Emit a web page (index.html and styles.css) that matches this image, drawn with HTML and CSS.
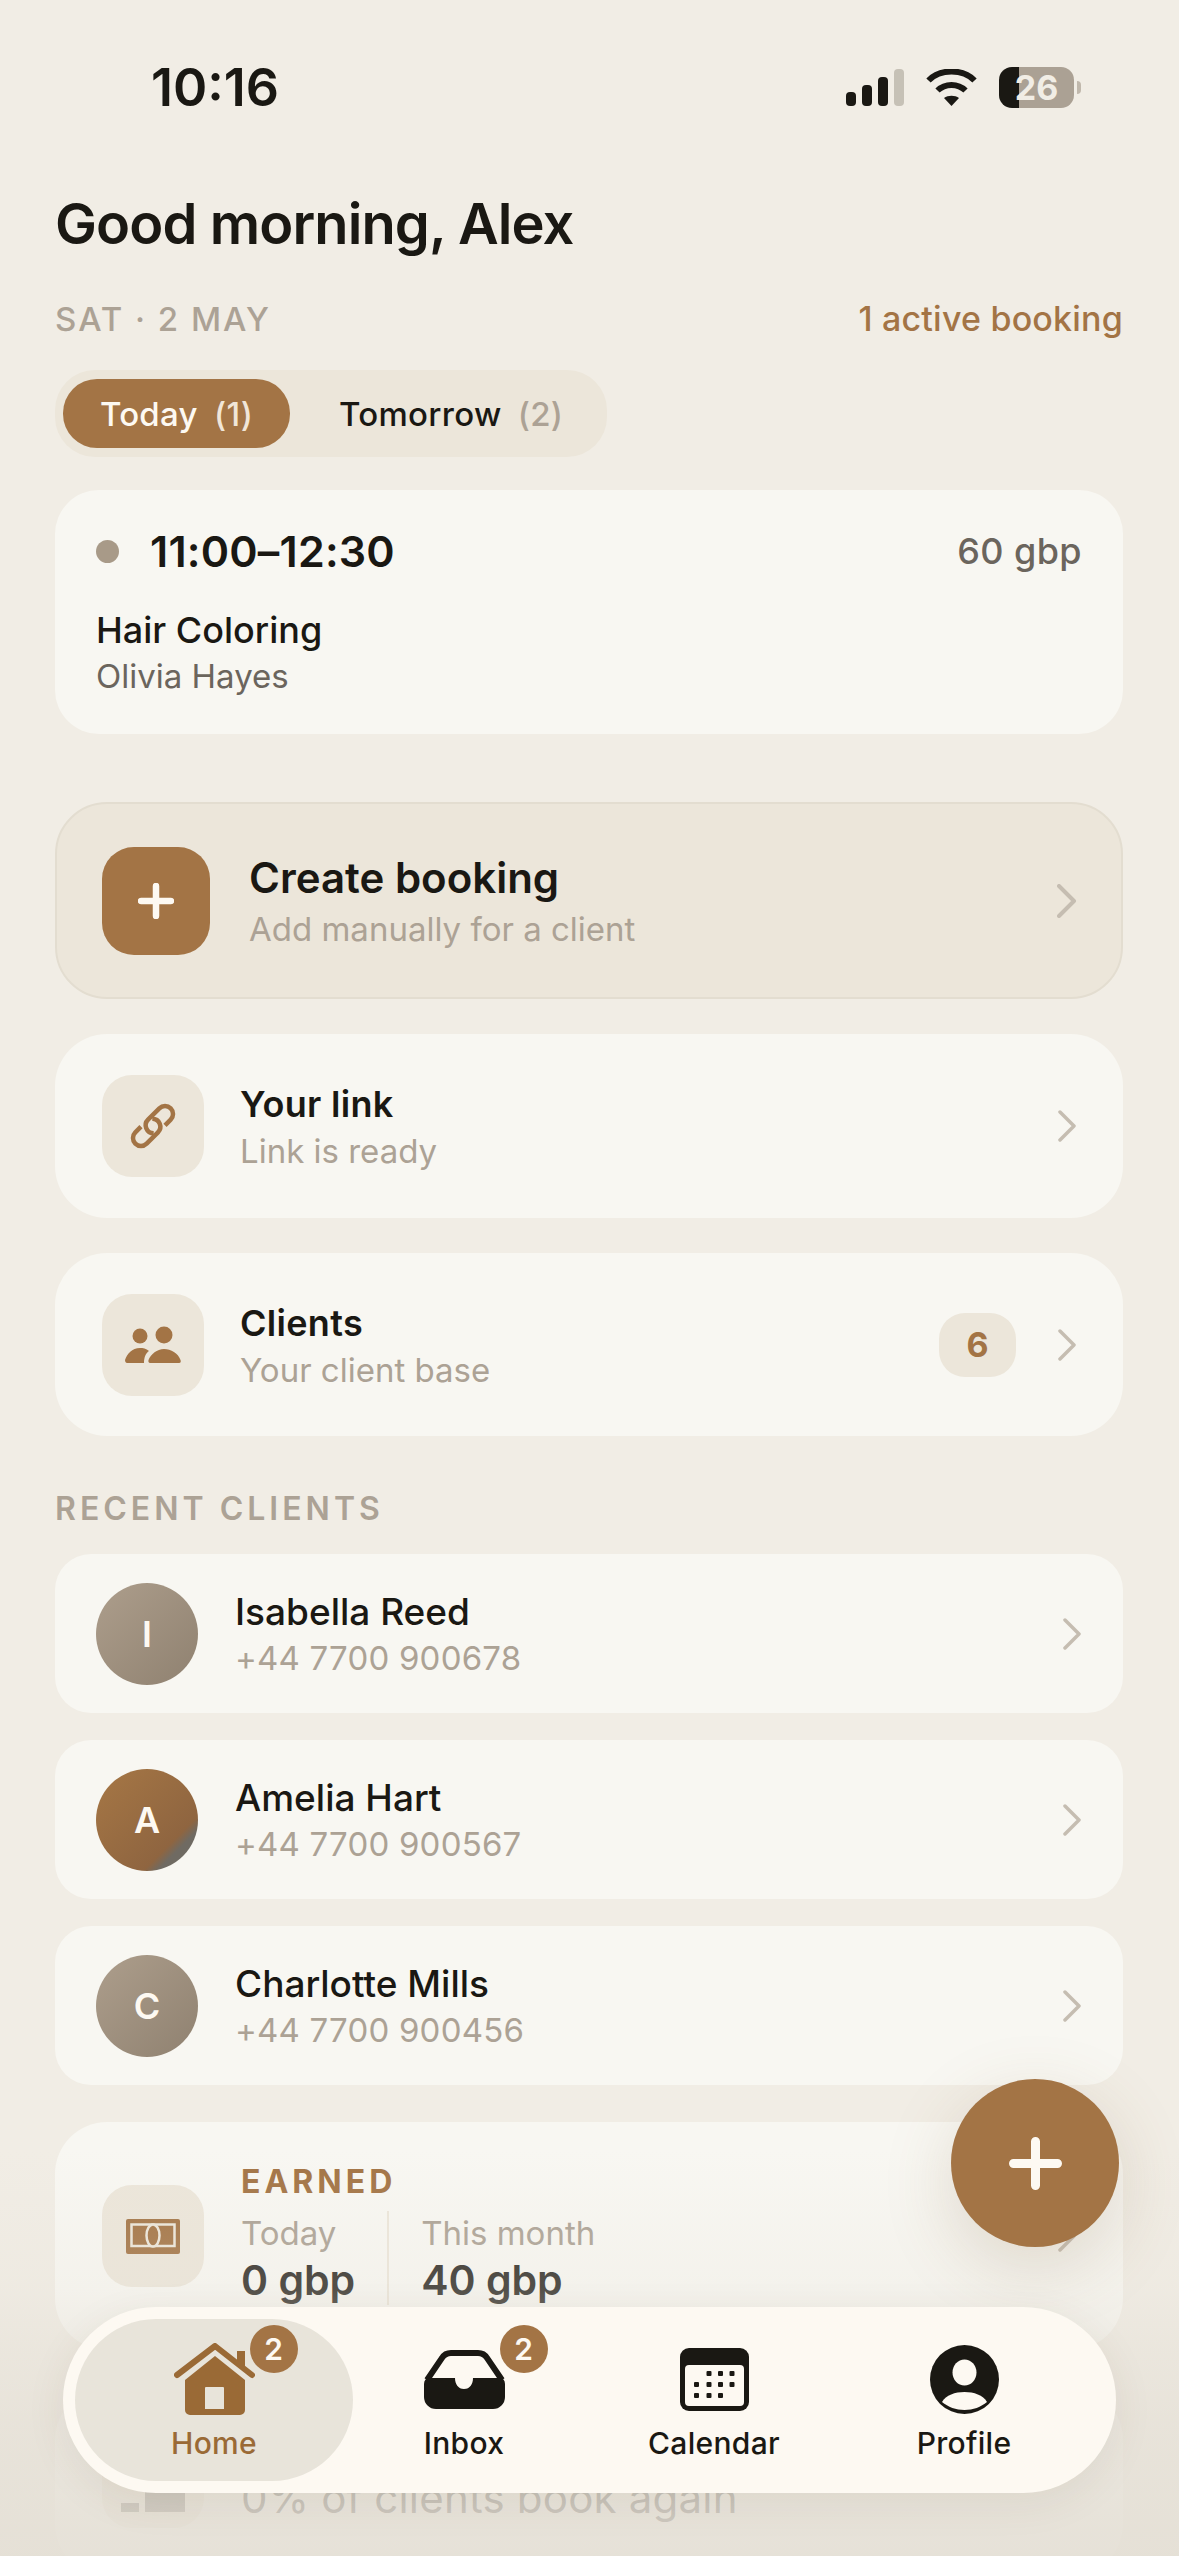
FILE: index.html
```html
<!DOCTYPE html>
<html lang="en">
<head>
<meta charset="UTF-8">
<meta name="viewport" content="width=device-width, initial-scale=1.0">
<title>Home</title>
<link rel="stylesheet" href="styles.css">
</head>
<body>
<div class="screen">
    <div class="status-bar">
        <span class="status-time">10:16</span>
        <div class="status-icons">
            <div class="signal">
                <span class="bar bar-1"></span>
                <span class="bar bar-2"></span>
                <span class="bar bar-3"></span>
                <span class="bar bar-4"></span>
            </div>
            <svg class="wifi" width="51" height="37" viewBox="0 0 51 37">
                <path d="M2.5 11.5C14 -0.5 37 -0.5 48.5 11.5" fill="none" stroke="#1a1813" stroke-width="6"/>
                <path d="M11.5 21.5C19 14 32 14 39.5 21.5" fill="none" stroke="#1a1813" stroke-width="6"/>
                <path d="M25.5 37L18 29C22 26 29 26 33 29Z" fill="#1a1813"/>
            </svg>
            <div class="battery">26</div>
        </div>
    </div>

    <div class="content">
        <h1 class="greeting">Good morning, Alex</h1>
        <div class="date-row">
            <span class="date">SAT · 2 MAY</span>
            <span class="active-count">1 active booking</span>
        </div>

        <div class="day-tabs">
            <div class="day-tab active">Today <span class="tab-count">(1)</span></div>
            <div class="day-tab">Tomorrow <span class="tab-count">(2)</span></div>
        </div>

        <div class="booking-card">
            <div class="booking-top">
                <span class="booking-dot"></span>
                <span class="booking-time">11:00–12:30</span>
                <span class="booking-price">60 gbp</span>
            </div>
            <div class="booking-service">Hair Coloring</div>
            <div class="booking-client">Olivia Hayes</div>
        </div>

        <div class="create-card">
            <div class="create-icon">
                <svg width="36" height="36" viewBox="0 0 36 36"><path d="M18 3V33M3 18H33" stroke="#fdf9f2" stroke-width="6.5" stroke-linecap="round"/></svg>
            </div>
            <div class="row-text">
                <div class="create-title">Create booking</div>
                <div class="create-sub">Add manually for a client</div>
            </div>
            <svg class="chevron chevron-create" width="20" height="34" viewBox="0 0 20 34"><path d="M2 2L17 17L2 32" fill="none" stroke="#c5bdb1" stroke-width="4" stroke-linecap="round" stroke-linejoin="round"/></svg>
        </div>

        <div class="action-card">
            <div class="icon-box">
                <svg width="52" height="52" viewBox="-26 -26 52 52" fill="none" stroke="#a37445" stroke-width="4.5">
                    <g transform="rotate(-45)">
                        <path d="M9 8H17A8 8 0 0 0 17 -8H1A8 8 0 0 0 -4.66 5.66"/>
                        <path d="M-9 -8H-17A8 8 0 0 0 -17 8H-1A8 8 0 0 0 4.66 -5.66"/>
                    </g>
                </svg>
            </div>
            <div class="row-text">
                <div class="row-title">Your link</div>
                <div class="row-sub">Link is ready</div>
            </div>
            <svg class="chevron" width="20" height="32" viewBox="0 0 20 32"><path d="M3 2L17 16L3 30" fill="none" stroke="#c5bdb1" stroke-width="3.5" stroke-linecap="round" stroke-linejoin="round"/></svg>
        </div>

        <div class="action-card clients-card">
            <div class="icon-box">
                <svg width="56" height="37" viewBox="0 0 56 37" fill="#a37445">
                    <circle cx="15" cy="10" r="7.5"/>
                    <circle cx="39" cy="9" r="8.5"/>
                    <path d="M2 37H19C19 31 21 27 24 25C21 22.5 18 22 15 22C7 22 2 28 0 34C0 36 1 37 2 37Z"/>
                    <path d="M25 37H54C56 37 56 35 55.5 34C53 27 46 23 39 23C32 23 26 28 23.5 34C23 36 24 37 25 37Z"/>
                </svg>
            </div>
            <div class="row-text">
                <div class="row-title">Clients</div>
                <div class="row-sub">Your client base</div>
            </div>
            <span class="count-badge">6</span>
            <svg class="chevron" width="20" height="32" viewBox="0 0 20 32"><path d="M3 2L17 16L3 30" fill="none" stroke="#c5bdb1" stroke-width="3.5" stroke-linecap="round" stroke-linejoin="round"/></svg>
        </div>

        <div class="section-label">RECENT CLIENTS</div>

        <div class="client-list">
            <div class="client-row">
                <div class="avatar">I</div>
                <div class="row-text">
                    <div class="client-name">Isabella Reed</div>
                    <div class="client-phone">+44 7700 900678</div>
                </div>
                <svg class="chevron chevron-client" width="20" height="32" viewBox="0 0 20 32"><path d="M3 2L17 16L3 30" fill="none" stroke="#c5bdb1" stroke-width="3.5" stroke-linecap="round" stroke-linejoin="round"/></svg>
            </div>
            <div class="client-row">
                <div class="avatar avatar-warm">A</div>
                <div class="row-text">
                    <div class="client-name">Amelia Hart</div>
                    <div class="client-phone">+44 7700 900567</div>
                </div>
                <svg class="chevron chevron-client" width="20" height="32" viewBox="0 0 20 32"><path d="M3 2L17 16L3 30" fill="none" stroke="#c5bdb1" stroke-width="3.5" stroke-linecap="round" stroke-linejoin="round"/></svg>
            </div>
            <div class="client-row">
                <div class="avatar">C</div>
                <div class="row-text">
                    <div class="client-name">Charlotte Mills</div>
                    <div class="client-phone">+44 7700 900456</div>
                </div>
                <svg class="chevron chevron-client" width="20" height="32" viewBox="0 0 20 32"><path d="M3 2L17 16L3 30" fill="none" stroke="#c5bdb1" stroke-width="3.5" stroke-linecap="round" stroke-linejoin="round"/></svg>
            </div>
        </div>

        <div class="earned-card">
            <div class="icon-box">
                <svg width="54" height="35" viewBox="0 0 54 35">
                    <rect width="54" height="35" rx="2" fill="#a37445"/>
                    <rect x="5.5" y="5.5" width="43" height="21.5" fill="none" stroke="#ece6da" stroke-width="2.5"/>
                    <ellipse cx="27" cy="16.5" rx="6.5" ry="11" fill="#a37445" stroke="#ece6da" stroke-width="2.5"/>
                </svg>
            </div>
            <div class="earned-body">
                <div class="earned-label">EARNED</div>
                <div class="earned-cols">
                    <div class="earned-col">
                        <div class="earned-period">Today</div>
                        <div class="earned-value">0 gbp</div>
                    </div>
                    <div class="earned-col earned-col-month">
                        <div class="earned-period">This month</div>
                        <div class="earned-value">40 gbp</div>
                    </div>
                </div>
            </div>
            <svg class="chevron" width="20" height="32" viewBox="0 0 20 32"><path d="M3 2L17 16L3 30" fill="none" stroke="#c5bdb1" stroke-width="3.5" stroke-linecap="round" stroke-linejoin="round"/></svg>
        </div>

        <div class="rebook-card">
            <div class="icon-box">
                <svg width="64" height="69" viewBox="0 0 64 69" fill="#6b655d">
                    <rect x="0" y="60" width="18" height="9"/>
                    <rect x="24" y="40" width="40" height="29"/>
                </svg>
            </div>
            <div class="rebook-text">0% of clients book again</div>
        </div>
    </div>

    <div class="bottom-fade"></div>

    <button class="fab">
        <svg width="53" height="53" viewBox="0 0 53 53"><path d="M26.5 4.5V48.5M4.5 26.5H48.5" stroke="#fdf9f2" stroke-width="9" stroke-linecap="round"/></svg>
    </button>

    <nav class="tab-bar">
        <div class="tab-item active">
            <div class="tab-icon">
                <svg width="81" height="72" viewBox="0 0 81 72" fill="#9a6a36">
                    <path d="M3 32L41 3L78 32" fill="none" stroke="#9a6a36" stroke-width="6" stroke-linecap="round" stroke-linejoin="round"/>
                    <rect x="63" y="8" width="8" height="16"/>
                    <path fill-rule="evenodd" d="M41 13L71 37V67a5 5 0 0 1-5 5H16a5 5 0 0 1-5-5V37ZM32 44a1 1 0 0 0-1 1V66H50V45a1 1 0 0 0-1-1Z"/>
                </svg>
                <span class="tab-badge">2</span>
            </div>
            <span class="tab-label">Home</span>
        </div>
        <div class="tab-item">
            <div class="tab-icon">
                <svg width="81" height="59" viewBox="0 0 81 59">
                    <path d="M3 30L18 8Q21 3 27 3H54Q60 3 63 8L78 30" fill="none" stroke="#1a1813" stroke-width="6"/>
                    <path d="M0 34Q0 28 6 28H31C31 34 34 39 40 39C46 39 49 34 49 28H75Q81 28 81 34V47A12 12 0 0 1 69 59H12A12 12 0 0 1 0 47Z" fill="#1a1813"/>
                </svg>
                <span class="tab-badge">2</span>
            </div>
            <span class="tab-label">Inbox</span>
        </div>
        <div class="tab-item">
            <div class="tab-icon">
                <svg width="69" height="63" viewBox="0 0 69 63">
                    <rect width="69" height="63" rx="9" fill="#1a1813"/>
                    <rect x="5" y="17" width="59" height="41" rx="4" fill="#fdf9f2"/>
                    <g fill="#1a1813">
                        <rect x="26.5" y="23" width="5" height="5" rx="1"/><rect x="38" y="23" width="5" height="5" rx="1"/><rect x="49.5" y="23" width="5" height="5" rx="1"/>
                        <rect x="14" y="34" width="5" height="5" rx="1"/><rect x="26.5" y="34" width="5" height="5" rx="1"/><rect x="38" y="34" width="5" height="5" rx="1"/><rect x="49.5" y="34" width="5" height="5" rx="1"/>
                        <rect x="14" y="45" width="5" height="5" rx="1"/><rect x="26.5" y="45" width="5" height="5" rx="1"/><rect x="38" y="45" width="5" height="5" rx="1"/>
                    </g>
                </svg>
            </div>
            <span class="tab-label">Calendar</span>
        </div>
        <div class="tab-item">
            <div class="tab-icon">
                <svg width="69" height="69" viewBox="0 0 69 69">
                    <circle cx="34.5" cy="34.5" r="34.5" fill="#1a1813"/>
                    <ellipse cx="34.5" cy="27.5" rx="12" ry="13" fill="#fdf9f2"/>
                    <path d="M12 57C16 50 25 47 34.5 47C44 47 53 50 57 57C51 62 43 65 34.5 65C26 65 18 62 12 57Z" fill="#fdf9f2"/>
                </svg>
            </div>
            <span class="tab-label">Profile</span>
        </div>
    </nav>
</div>
</body>
</html>
```

FILE: styles.css
```css
* {
    box-sizing: border-box;
}
body {
    margin: 0;
    padding: 0;
    background-color: #f1ede5;
    font-family: Inter, "Liberation Sans", Arial, sans-serif;
    color: #1a1813;
}
.screen {
    position: relative;
    width: 1179px;
    height: 2556px;
    overflow: hidden;
    padding-top: 60px;
    background-color: #f1ede5;
}

/* status bar */
.status-bar {
    display: flex;
    align-items: center;
    justify-content: space-between;
    height: 54px;
    padding: 0 98px 0 151px;
}
.status-time {
    padding-top: 2px;
    font-size: 52px;
    font-weight: 600;
    line-height: 54px;
}
.status-icons {
    display: flex;
    align-items: center;
    gap: 22px;
}
.signal {
    display: flex;
    align-items: flex-end;
    gap: 6px;
    height: 37px;
}
.bar {
    width: 10px;
    border-radius: 4px;
    background-color: #1a1813;
}
.bar-1 { height: 14px; }
.bar-2 { height: 21px; }
.bar-3 { height: 29px; }
.bar-4 { height: 37px; background-color: #c6c1b6; }
.battery {
    position: relative;
    width: 75px;
    height: 41px;
    margin-right: 7px;
    border-radius: 13px;
    background: linear-gradient(to right, #1a1813 20px, #aba194 20px);
    color: #f1ede5;
    font-size: 34px;
    font-weight: 700;
    line-height: 41px;
    text-align: center;
}
.battery::after {
    content: "";
    position: absolute;
    left: 78px;
    top: 14px;
    width: 4px;
    height: 13px;
    border-radius: 0 6px 6px 0;
    background-color: #c0b8ac;
}

/* page content */
.content {
    padding: 0 56px 0 55px;
    margin-top: 76px;
}
.greeting {
    margin: 0;
    font-size: 56px;
    font-weight: 600;
    line-height: 68px;
    letter-spacing: -0.9px;
}
.date-row {
    display: flex;
    justify-content: space-between;
    margin-top: 41px;
    line-height: 40px;
}
.date {
    font-size: 33px;
    font-weight: 500;
    letter-spacing: 2px;
    color: #aca295;
}
.active-count {
    font-size: 34px;
    font-weight: 500;
    letter-spacing: 0.2px;
    color: #a37445;
}
.day-tabs {
    display: flex;
    width: 552px;
    height: 87px;
    margin-top: 31px;
    padding: 9px 8px;
    border-radius: 40px;
    background-color: #ece6da;
}
.day-tab {
    display: flex;
    align-items: center;
    justify-content: center;
    gap: 7px;
    padding-left: 49px;
    font-size: 33px;
    font-weight: 500;
    letter-spacing: 0.3px;
    border-radius: 34px;
    white-space: pre;
}
.day-tab.active {
    flex-shrink: 0;
    width: 227px;
    padding: 0;
    background-color: #a37445;
    color: #fdf9f2;
}
.day-tab.active .tab-count {
    color: #f1e6d8;
}
.tab-count {
    color: #aca295;
}

/* booking */
.booking-card {
    height: 244px;
    margin-top: 33px;
    padding: 36px 41px 0;
    border-radius: 44px;
    background-color: #f8f7f2;
}
.booking-top {
    display: flex;
    align-items: center;
    height: 50px;
}
.booking-dot {
    width: 23px;
    height: 23px;
    border-radius: 50%;
    background-color: #a89a88;
}
.booking-time {
    margin-left: 31px;
    font-size: 43px;
    font-weight: 600;
    letter-spacing: 0.2px;
}
.booking-price {
    margin-left: auto;
    font-size: 36px;
    font-weight: 500;
    letter-spacing: 0.4px;
    color: #6b655d;
}
.booking-service {
    margin-top: 32px;
    font-size: 36px;
    font-weight: 500;
    line-height: 44px;
}
.booking-client {
    margin-top: 4px;
    font-size: 33px;
    line-height: 40px;
    color: #6b655d;
}

/* action cards */
.create-card {
    display: flex;
    align-items: center;
    height: 197px;
    margin-top: 68px;
    padding: 0 45px;
    border: 2px solid #e3ddd0;
    border-radius: 52px;
    background-color: #ece6da;
}
.create-icon {
    display: flex;
    align-items: center;
    justify-content: center;
    flex-shrink: 0;
    width: 108px;
    height: 108px;
    margin-right: 39px;
    border-radius: 32px;
    background-color: #a37445;
}
.row-text {
    flex-grow: 1;
}
.create-title {
    font-size: 42px;
    font-weight: 600;
    line-height: 52px;
}
.create-sub {
    margin-top: 5px;
    font-size: 33px;
    line-height: 40px;
    color: #aca295;
}
.chevron {
    flex-shrink: 0;
    margin-right: -1px;
}
.action-card {
    display: flex;
    align-items: center;
    height: 184px;
    margin-top: 35px;
    padding: 0 47px;
    border-radius: 52px;
    background-color: #f8f7f2;
}
.clients-card {
    height: 183px;
}
.icon-box {
    display: flex;
    align-items: center;
    justify-content: center;
    flex-shrink: 0;
    width: 102px;
    height: 102px;
    margin-right: 36px;
    border-radius: 30px;
    background-color: #ece6da;
}
.row-title {
    font-size: 36px;
    font-weight: 600;
    letter-spacing: 0.3px;
    line-height: 46px;
}
.row-sub {
    margin-top: 4px;
    font-size: 33px;
    line-height: 40px;
    color: #aca295;
}
.count-badge {
    width: 77px;
    height: 64px;
    margin-right: 41px;
    border-radius: 26px;
    background-color: #ece6da;
    color: #a37445;
    font-size: 34px;
    font-weight: 700;
    line-height: 64px;
    text-align: center;
}

/* recent clients */
.section-label {
    margin-top: 53px;
    font-size: 32px;
    font-weight: 600;
    line-height: 40px;
    letter-spacing: 4px;
    color: #aca295;
}
.client-list {
    display: flex;
    flex-direction: column;
    gap: 27px;
    margin-top: 25px;
}
.client-row {
    display: flex;
    align-items: center;
    height: 159px;
    padding: 0 41px;
    border-radius: 36px;
    background-color: #f8f7f2;
}
.avatar {
    flex-shrink: 0;
    width: 102px;
    height: 102px;
    margin-right: 37px;
    border-radius: 50%;
    background: linear-gradient(135deg, #ad9e8c, #8f8170);
    color: #fdf9f2;
    font-size: 36px;
    font-weight: 600;
    line-height: 102px;
    text-align: center;
}
.avatar-warm {
    background: linear-gradient(135deg, #a67745 0%, #8f6540 73%, #6f6a62 80%);
}
.client-name {
    font-size: 37px;
    font-weight: 500;
    line-height: 46px;
}
.client-phone {
    margin-top: 3px;
    font-size: 33px;
    letter-spacing: 0.2px;
    line-height: 40px;
    color: #aca295;
}
.chevron-client {
    margin-right: 0;
}

/* earned */
.earned-card {
    display: flex;
    align-items: center;
    height: 228px;
    margin-top: 37px;
    padding: 0 47px;
    border-radius: 52px;
    background-color: #f8f7f2;
}
.earned-card .icon-box {
    margin-right: 37px;
}
.earned-body {
    flex-grow: 1;
    padding-bottom: 6px;
}
.earned-label {
    font-size: 32px;
    font-weight: 700;
    line-height: 40px;
    letter-spacing: 4px;
    color: #a37445;
}
.earned-cols {
    display: flex;
    margin-top: 9px;
}
.earned-col-month {
    margin-left: 32px;
    padding-left: 32px;
    border-left: 2px solid #ece6da;
}
.earned-period {
    font-size: 33px;
    line-height: 44px;
    color: #aca295;
}
.earned-value {
    font-size: 41px;
    font-weight: 600;
    line-height: 50px;
    color: #2f2c27;
}
.rebook-card {
    display: flex;
    align-items: center;
    height: 188px;
    margin-top: 38px;
    padding: 0 47px;
    border-radius: 52px;
    background-color: #f8f7f2;
}
.rebook-card .icon-box {
    margin-top: -10px;
    margin-right: 37px;
}
.rebook-text {
    margin-top: 30px;
    font-size: 42px;
    letter-spacing: 0.2px;
    color: #45413c;
}

/* floating stuff */
.bottom-fade {
    position: absolute;
    left: 0;
    right: 0;
    bottom: 0;
    height: 406px;
    background: linear-gradient(to bottom, rgba(228, 223, 213, 0), rgba(228, 223, 213, 0.2) 34%, rgba(228, 223, 213, 0.45) 47%, rgba(228, 223, 213, 0.7) 67%, rgba(228, 223, 213, 0.9));
}
.fab {
    position: absolute;
    right: 60px;
    bottom: 309px;
    display: flex;
    align-items: center;
    justify-content: center;
    width: 168px;
    height: 168px;
    padding: 0;
    border: none;
    border-radius: 50%;
    background-color: #a37445;
    box-shadow: 0 20px 70px rgba(120, 90, 50, 0.18);
}
.tab-bar {
    position: absolute;
    left: 63px;
    right: 63px;
    bottom: 63px;
    display: flex;
    align-items: center;
    height: 186px;
    padding-left: 26px;
    border-radius: 93px;
    background-color: #fdf9f2;
    box-shadow: 0 10px 40px rgba(90, 70, 40, 0.08);
}
.tab-item {
    display: flex;
    flex-direction: column;
    align-items: center;
    width: 250px;
    height: 162px;
    padding-top: 24px;
}
.tab-item.active {
    width: 278px;
    margin: 0 -14px;
    border-radius: 81px;
    background-color: #e8e4da;
    color: #9a6a36;
}
.tab-icon {
    position: relative;
    display: flex;
    align-items: center;
    justify-content: center;
    height: 72px;
}
.tab-badge {
    position: absolute;
    left: 76px;
    top: -18px;
    width: 48px;
    height: 48px;
    border-radius: 50%;
    background-color: #a37445;
    color: #fdf9f2;
    font-size: 30px;
    font-weight: 600;
    line-height: 48px;
    text-align: center;
}
.tab-label {
    margin-top: 9px;
    font-size: 30px;
    font-weight: 500;
    letter-spacing: 0.3px;
    line-height: 38px;
}
```
